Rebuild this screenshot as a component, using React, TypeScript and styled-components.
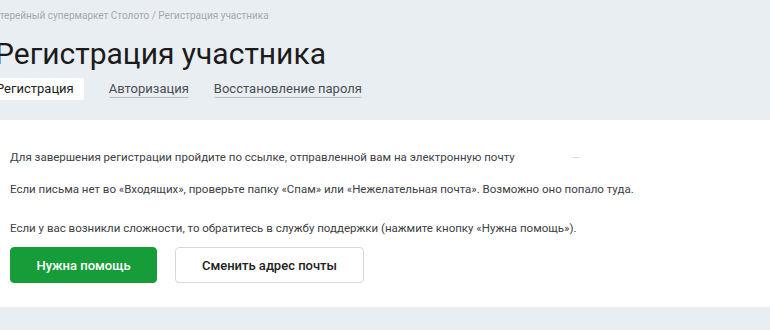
import React from 'react';
import styled, { createGlobalStyle } from 'styled-components';

const GlobalStyle = createGlobalStyle`
  * { box-sizing: border-box; }
  html, body {
    margin: 0;
    padding: 0;
    background: #e9eef2;
    font-family: Roboto, 'Liberation Sans', sans-serif;
    overflow: hidden;
  }
`;

const Page = styled.div`
  width: 770px;
  height: 330px;
  background: #e9eef2;
  display: flex;
  flex-direction: column;
`;

const Header = styled.div`
  margin-left: -13px;
  padding-top: 10px;
  height: 120px;
`;

const Breadcrumbs = styled.div`
  font-size: 10px;
  line-height: 12px;
  color: #a3a9b0;
`;

const Title = styled.h1`
  margin: 14px 0 0 8px;
  font-size: 30px;
  line-height: 36px;
  font-weight: 400;
  color: #1b1b1b;
`;

const Tabs = styled.div`
  display: flex;
  align-items: center;
  gap: 25px;
  margin-top: 6px;
`;

const Tab = styled.span<{ $active?: boolean }>`
  font-size: 13px;
  color: ${p => (p.$active ? '#222' : '#4a4d52')};
  background: ${p => (p.$active ? '#fff' : 'transparent')};
  padding: ${p => (p.$active ? '0 10px 0 9px' : '0')};
  border-radius: 2px;
  border-bottom: ${p => (p.$active ? 'none' : '1px solid #b7bcc2')};
  line-height: ${p => (p.$active ? '22px' : '17px')};
`;

const Panel = styled.div`
  background: #fff;
  padding: 30px 10px 0;
  height: 187px;
`;

const Text = styled.p<{ $gap: number }>`
  margin: 0 0 ${p => p.$gap}px;
  font-size: 11.5px;
  line-height: 14px;
  color: #3d4044;
`;

// остаток замазанного адреса почты
const Masked = styled.span`
  display: inline-block;
  width: 6px;
  height: 1px;
  margin-left: 58px;
  vertical-align: middle;
  background: #d6d9dc;
`;

const Buttons = styled.div`
  display: flex;
  gap: 18px;
`;

const Button = styled.button<{ $primary?: boolean }>`
  height: 36px;
  padding: 0;
  width: ${p => (p.$primary ? '147px' : '189px')};
  border-radius: 4px;
  font-family: inherit;
  font-size: 13px;
  font-weight: 500;
  cursor: pointer;
  color: ${p => (p.$primary ? '#fff' : '#222')};
  background: ${p => (p.$primary ? '#169c38' : '#fff')};
  border: 1px solid ${p => (p.$primary ? '#169c38' : '#d5d9dd')};
`;

export default function App() {
  return (
    <Page>
      <GlobalStyle />
      <Header>
        <Breadcrumbs>Лотерейный супермаркет Столото / Регистрация участника</Breadcrumbs>
        <Title>Регистрация участника</Title>
        <Tabs>
          <Tab $active>Регистрация</Tab>
          <Tab>Авторизация</Tab>
          <Tab>Восстановление пароля</Tab>
        </Tabs>
      </Header>
      <Panel>
        <Text $gap={18}>
          Для завершения регистрации пройдите по ссылке, отправленной вам на электронную почту
          <Masked />
        </Text>
        <Text $gap={25}>Если письма нет во «Входящих», проверьте папку «Спам» или «Нежелательная почта». Возможно оно попало туда.</Text>
        <Text $gap={12}>Если у вас возникли сложности, то обратитесь в службу поддержки (нажмите кнопку «Нужна помощь»).</Text>
        <Buttons>
          <Button $primary>Нужна помощь</Button>
          <Button>Сменить адрес почты</Button>
        </Buttons>
      </Panel>
    </Page>
  );
}
